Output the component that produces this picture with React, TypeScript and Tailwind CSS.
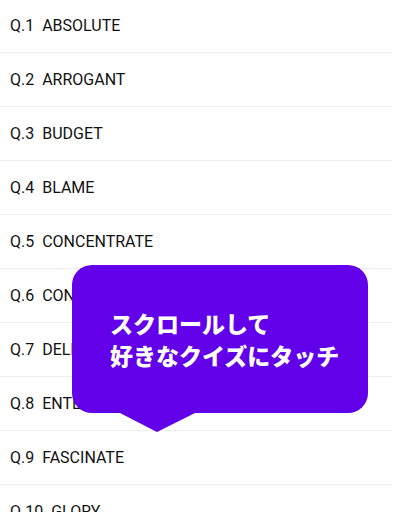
const words = [
  "ABSOLUTE",
  "ARROGANT",
  "BUDGET",
  "BLAME",
  "CONCENTRATE",
  "CONSIDER",
  "DELIVER",
  "ENTERTAIN",
  "FASCINATE",
  "GLORY",
];

export default function App() {
  return (
    <div className="relative h-[512px] w-[398px] overflow-hidden bg-white font-['Roboto',sans-serif]">
      {/* Quiz list */}
      <ul className="-mt-[1px] w-[392px]">
        {words.map((word, i) => (
          <li
            key={word}
            className="flex h-[54px] items-center border-b border-[#eeeeee] pl-[10px] text-[16px] text-[#111111]"
          >
            <span className="whitespace-pre">{`Q.${i + 1}  ${word}`}</span>
          </li>
        ))}
      </ul>

      {/* Hint bubble */}
      <div className="absolute left-[72px] top-[265px] w-[296px]">
        <div className="flex h-[148px] flex-col justify-center rounded-[20px] bg-[#6200ea] pl-[38px] font-['Noto_Sans_CJK_JP',sans-serif] text-[23px] font-black leading-[32px] text-white">
          <p>スクロールして</p>
          <p>好きなクイズにタッチ</p>
        </div>
        <svg
          className="ml-[48px] block"
          width="75"
          height="19"
          viewBox="0 0 75 19"
        >
          <polygon points="0,0 75,0 37,19" fill="#6200ea" />
        </svg>
      </div>
    </div>
  );
}
